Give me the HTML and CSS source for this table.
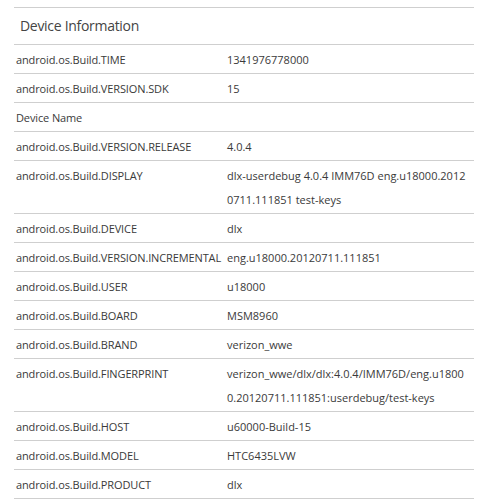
FILE: index.html
```html
<!DOCTYPE html>
<html>
<head>
<meta charset="utf-8">
<link rel="stylesheet" href="styles.css">
</head>
<body>
<div class="panel">
  <div class="title">Device Information</div>
  <div class="row"><div class="key">android.os.Build.TIME</div><div class="val">1341976778000</div></div>
  <div class="row"><div class="key">android.os.Build.VERSION.SDK</div><div class="val">15</div></div>
  <div class="row"><div class="key">Device Name</div><div class="val"></div></div>
  <div class="row"><div class="key">android.os.Build.VERSION.RELEASE</div><div class="val">4.0.4</div></div>
  <div class="row"><div class="key">android.os.Build.DISPLAY</div><div class="val">dlx-userdebug 4.0.4 IMM76D eng.u18000.20120711.111851 test-keys</div></div>
  <div class="row"><div class="key">android.os.Build.DEVICE</div><div class="val">dlx</div></div>
  <div class="row"><div class="key">android.os.Build.VERSION.INCREMENTAL</div><div class="val">eng.u18000.20120711.111851</div></div>
  <div class="row"><div class="key">android.os.Build.USER</div><div class="val">u18000</div></div>
  <div class="row"><div class="key">android.os.Build.BOARD</div><div class="val">MSM8960</div></div>
  <div class="row"><div class="key">android.os.Build.BRAND</div><div class="val">verizon_wwe</div></div>
  <div class="row"><div class="key">android.os.Build.FINGERPRINT</div><div class="val">verizon_wwe/dlx/dlx:4.0.4/IMM76D/eng.u18000.20120711.111851:userdebug/test-keys</div></div>
  <div class="row"><div class="key">android.os.Build.HOST</div><div class="val">u60000-Build-15</div></div>
  <div class="row"><div class="key">android.os.Build.MODEL</div><div class="val">HTC6435LVW</div></div>
  <div class="row"><div class="key">android.os.Build.PRODUCT</div><div class="val">dlx</div></div>
</div>
</body>
</html>
```
FILE: styles.css
```css
html, body {
  margin: 0;
  padding: 0;
  background: #fff;
}
body {
  font-family: "Open Sans", "DejaVu Sans", sans-serif;
  color: #3a3a3a;
}
.panel {
  margin: 7px 12px 0 14px;
  border-top: 1px solid #cfcfcf;
}
.title {
  height: 36px;
  line-height: 35px;
  padding-left: 6px;
  font-size: 14px;
  letter-spacing: -0.3px;
  color: #444;
  border-bottom: 1px solid #cfcfcf;
}
.row {
  display: grid;
  grid-template-columns: 211px 1fr;
  padding: 3px 0 1px 2px;
  font-size: 11px;
  line-height: 24px;
  border-bottom: 1px solid #cfcfcf;
}
.key {
  white-space: nowrap;
  letter-spacing: -0.12px;
}
.val {
  word-break: break-all;
  padding-right: 8px;
}
```
